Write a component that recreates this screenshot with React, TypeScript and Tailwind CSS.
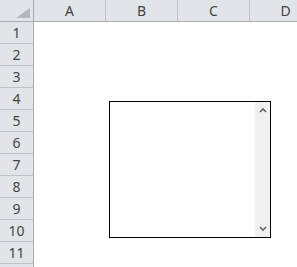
import React from "react";

const cols = ["A", "B", "C", "D"];
const rows = [1, 2, 3, 4, 5, 6, 7, 8, 9, 10, 11];

export default function App() {
  return (
    <div
      className="relative w-[297px] h-[267px] overflow-hidden bg-white"
      style={{ fontFamily: '"Noto Sans", "Open Sans", sans-serif' }}
    >
      <div className="flex h-[22px] bg-[#e1e4e8] border-b border-[#a9acaf]">
        <div className="relative w-[34px] shrink-0 border-r border-[#a9acaf]">
          <svg className="absolute left-[16px] top-[8px]" width="14" height="10" viewBox="0 0 14 10">
            <polygon points="0,10 14,0 14,10" fill="#b5b7ba" />
          </svg>
        </div>
        {cols.map((c) => (
          <div
            key={c}
            className="w-[72px] shrink-0 border-r border-[#bfc2c5] flex items-center justify-center text-[14px] text-[#444] leading-none"
          >
            {c}
          </div>
        ))}
      </div>
      {rows.map((r) => (
        <div key={r} className="flex h-[22px]">
          <div className="w-[34px] shrink-0 bg-[#e1e4e8] border-r border-b border-r-[#a9acaf] border-b-[#bfc2c5] flex items-center justify-center text-[14px] text-[#444] leading-none">
            {r}
          </div>
          <div className="flex-1 bg-white" />
        </div>
      ))}
      <div className="flex h-[22px]">
        <div className="w-[34px] shrink-0 bg-[#e1e4e8] border-r border-[#a9acaf]" />
        <div className="flex-1 bg-white" />
      </div>
      <div className="absolute left-[109px] top-[101px] w-[162px] h-[137px] border border-black bg-white flex justify-end">
        <div className="w-[15px] h-full bg-[#f0f0f0] flex flex-col justify-between items-center py-[5px]">
          <svg width="8" height="6" viewBox="0 0 8 6">
            <path d="M1 5 L4 2 L7 5" fill="none" stroke="#666" strokeWidth="1.6" />
          </svg>
          <svg width="8" height="6" viewBox="0 0 8 6">
            <path d="M1 1 L4 4 L7 1" fill="none" stroke="#666" strokeWidth="1.6" />
          </svg>
        </div>
      </div>
    </div>
  );
}
